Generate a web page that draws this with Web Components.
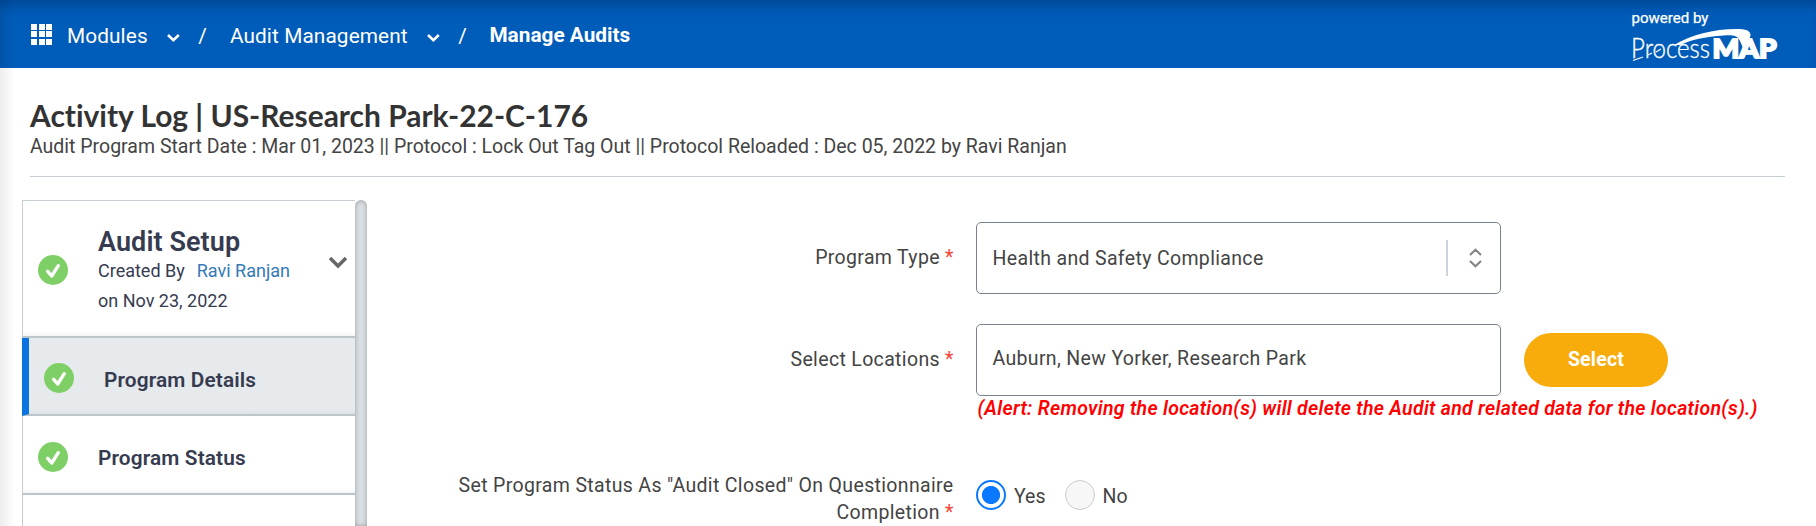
<!DOCTYPE html>
<html lang="en">
<head>
<meta charset="utf-8">
<title>Manage Audits</title>
<style>
html,body{margin:0;height:526px;overflow:hidden;background:#fff;font-family:Roboto,"Liberation Sans",sans-serif;color:#444}
</style>
</head>
<body>
<audit-app></audit-app>
<script>
const define=(name,html)=>customElements.define(name,class extends HTMLElement{
  constructor(){super();const t=document.createElement('template');t.innerHTML=html;this.attachShadow({mode:'open'}).append(t.content.cloneNode(true));}
});

define('nav-crumb',`<style>
:host{display:flex;align-items:center;color:#fff;font-size:20.800px;letter-spacing:.1px;line-height:24px;white-space:nowrap}
svg{display:block;margin:4px 0 0 18px}
i{font-style:normal;margin-left:17.500px}
</style><slot></slot><svg width="15" height="10" viewBox="0 0 15 10" fill="none" stroke="#fff" stroke-width="2.6"><path d="M2 2l5.4 5.3L12.800 2"/></svg><i>/</i>`);

define('process-logo',`<style>
:host{display:block;width:160px;height:68px}
svg{display:block}
text{fill:#fff}
</style><svg width="160" height="68" viewBox="0 0 160 68">
<text x="6.500" y="23" font-family="Roboto" font-size="14.500" font-weight="400" stroke="#fff" stroke-width=".25" textLength="77" lengthAdjust="spacingAndGlyphs">powered by</text>
<text x="6" y="58" font-family="Lato" font-weight="300" font-size="26.500" stroke="#fff" stroke-width=".35" textLength="79" lengthAdjust="spacingAndGlyphs">Process</text>
<text x="87.500" y="57.500" font-family="Lato" font-weight="900" font-size="26" stroke="#fff" stroke-width="1.900" textLength="64" lengthAdjust="spacingAndGlyphs">MAP</text>
<path d="M49 45C66 35 88 29 112 29C120 29 126 30 125.500 36L119 50L114.500 40C112 35 106 35 99 35.500C80 36.500 66 40 55 45Z" fill="#fff"/>
<path d="M8 60.500L18 57M23 55L27 53M31 52L36 49" stroke="#fff" stroke-width="1.300"/>
</svg>`);

define('app-header',`<style>
:host{display:flex;justify-content:space-between;height:68px;background:#005cb9;box-shadow:inset 0 12px 14px -8px rgba(0,20,60,.35)}
nav{display:flex;align-items:center;padding-left:31px;height:72px}
.grid{display:grid;grid-template-columns:repeat(3,6px);gap:1.500px;margin:-4px 15px 0 0}
.grid b{height:6px;background:#fff}
nav-crumb+nav-crumb{margin-left:23px}
strong{color:#fff;font-size:20.800px;font-weight:700;margin:-3px 0 0 22.500px;white-space:nowrap}
process-logo{margin-right:31px}
</style><nav><div class="grid"><b></b><b></b><b></b><b></b><b></b><b></b><b></b><b></b><b></b></div>
<nav-crumb>Modules</nav-crumb><nav-crumb>Audit Management</nav-crumb><strong>Manage Audits</strong></nav><process-logo></process-logo>`);

define('page-title',`<style>
:host{display:block;margin:0 31px 0 30px;height:109px;border-bottom:1px solid #c5ced2;box-sizing:border-box;padding-top:28px}
h1{margin:0 0 1px;font:700 29.950px/38px Lato,sans-serif;font-variant-ligatures:none;color:#333;white-space:nowrap}
p{margin:0;font-size:19.500px;line-height:24px;color:#444;white-space:nowrap}
</style><h1><slot name="title"></slot></h1><p><slot></slot></p>`);

define('check-icon',`<style>:host{display:block;width:30px;height:30px;flex:none}svg{display:block}</style>
<svg width="30" height="30" viewBox="0 0 30 30"><circle cx="15" cy="15" r="15" fill="#7ed066"/><path d="M9.700 16.300L13.700 21L20.300 10.700" fill="none" stroke="#fff" stroke-width="3.400" stroke-linecap="round" stroke-linejoin="round"/></svg>`);

define('setup-step',`<style>
:host{display:flex;align-items:center;box-sizing:border-box;height:78.500px;border-left:1px solid #c5ced2;border-bottom:2px solid #bcc5c9;background:linear-gradient(to top,#f4f5f6,#fff 5px);padding:5px 0 0 15px;font-size:20.800px;letter-spacing:.14px;font-weight:600;color:#363b50}
:host([active]){border-left:7px solid #0a74e0;background:linear-gradient(to top,#dfe3e6,#e6eaed 5px)}
.t{margin:3px 0 0 30px}
</style><check-icon></check-icon><div class="t"><slot></slot></div>`);

define('setup-head',`<style>
:host{display:flex;align-items:center;box-sizing:border-box;height:137.500px;border:solid #c5ced2;border-width:1px 0 2px 1px;border-bottom-color:#bcc5c9;background:linear-gradient(to top,#f4f5f6,#fff 5px);padding-left:15px;color:#363b50}
check-icon{margin-top:3px}
.t{margin:6px 0 0 30px;width:230px;font-size:18px;line-height:30px}
h2{margin:0 0 -2px;font-size:27px;letter-spacing:.08px;line-height:32px;font-weight:600}
span{color:#337ab7;margin-left:12px}
.c{margin-top:-12px}
</style><check-icon></check-icon><div class="t"><h2>Audit Setup</h2><div>Created By<span>Ravi Ranjan</span></div><div>on Nov 23, 2022</div></div>
<svg class="c" width="20" height="14" viewBox="0 0 20 14" fill="none" stroke="#666" stroke-width="3.400"><path d="M2 3l8 8 8-8"/></svg>`);

define('setup-sidebar',`<style>
:host{display:flex;width:345px;height:326px}
.list{width:333px}
.rest{height:40px;border-left:1px solid #c5ced2}
.bar{width:12px;border-radius:6px 6px 0 0;background:#dadfe3;box-shadow:inset 0 0 5px rgba(0,0,0,.3)}
</style><div class="list"><setup-head></setup-head><setup-step active>Program Details</setup-step><setup-step>Program Status</setup-step><div class="rest"></div></div><div class="bar"></div>`);

define('field-label',`<style>
:host{display:block;text-align:right;font-size:19.500px;letter-spacing:.34px;line-height:27px;color:#444}
b{font-weight:400;color:#f44336;letter-spacing:0}
</style><slot></slot> <b>*</b>`);

define('text-field',`<style>
:host{display:flex;align-items:center;box-sizing:border-box;width:525px;height:72px;border:1px solid #77828c;border-radius:5px;padding:0 17px 3px 15.500px;font-size:19.500px;letter-spacing:.34px;color:#444;justify-content:space-between}
:host([select]){padding-bottom:0}
.e{display:none}
:host([select]) .e{display:flex;align-items:center;gap:20px}
.e i{width:2px;height:36px;background:#ced4da}
</style><span><slot></slot></span><div class="e"><i></i><svg width="15" height="20" viewBox="0 0 15 20" fill="none" stroke="#868686" stroke-width="2.200"><path d="M2 7l5.500-5.300L13 7M2 13l5.500 5.300L13 13"/></svg></div>`);

define('pill-button',`<style>
:host{display:flex;align-items:center;justify-content:center;width:144px;height:54px;border-radius:27px;background:#f8ac0b;color:#fff;font-size:19.500px;letter-spacing:.2px;font-weight:700}
span{margin-top:-2px}
</style><span><slot></slot></span>`);

define('radio-option',`<style>
:host{display:flex;align-items:center;font-size:19.500px;color:#444;gap:8px}
i{box-sizing:border-box;width:30px;height:30px;border:1.500px solid #ccc;border-radius:50%;background:#f7f7f7;display:block}
:host([checked]) i{border:2px solid #0a78ff;background:radial-gradient(circle,#0a78ff 8.700px,#fff 9.400px)}
span{margin-top:2px}
</style><i></i><span><slot></slot></span>`);

define('program-form',`<style>
:host{display:grid;grid-template-columns:586.500px 1fr;column-gap:22.500px;grid-template-rows:72px 30px 72px 24px auto;padding-top:45px;width:1449px}
field-label.a{padding-top:22px}
.row{display:flex;align-items:center;gap:23px}
.sp{grid-column:1/3}
.alert{grid-column:2;color:#f00;font-style:italic;font-weight:600;font-size:19.500px;letter-spacing:.28px;line-height:26px;white-space:nowrap;padding-left:1.500px}
.q{padding:52px 0 0 70px}
.radios{display:flex;gap:19px;align-items:flex-start;padding-top:60px}
</style><field-label class="a">Program Type</field-label><text-field select>Health and Safety Compliance</text-field>
<div class="sp"></div><field-label class="a">Select Locations</field-label><div class="row"><text-field>Auburn, New Yorker, Research Park</text-field><pill-button>Select</pill-button></div>
<div class="alert">(Alert: Removing the location(s) will delete the Audit and related data for the location(s).)</div>
<field-label class="q">Set Program Status As "Audit Closed" On Questionnaire<br>Completion</field-label><div class="radios"><radio-option checked>Yes</radio-option><radio-option>No</radio-option></div>`);

define('audit-app',`<style>
:host{display:block;height:526px;overflow:hidden;position:relative}
main{display:flex;padding-left:22px}
setup-sidebar{margin-top:23px;flex:none}
.edge{position:absolute;left:0;top:0;bottom:0;width:15px;background:linear-gradient(to right,rgba(0,0,0,.07),transparent)}
</style><app-header></app-header><page-title><span slot="title">Activity Log | US-Research Park-22-C-176</span>Audit Program Start Date : Mar 01, 2023 || Protocol : Lock Out Tag Out || Protocol Reloaded : Dec 05, 2022 by Ravi Ranjan</page-title>
<main><setup-sidebar></setup-sidebar><program-form></program-form></main><div class="edge"></div>`);
</script>
</body>
</html>
